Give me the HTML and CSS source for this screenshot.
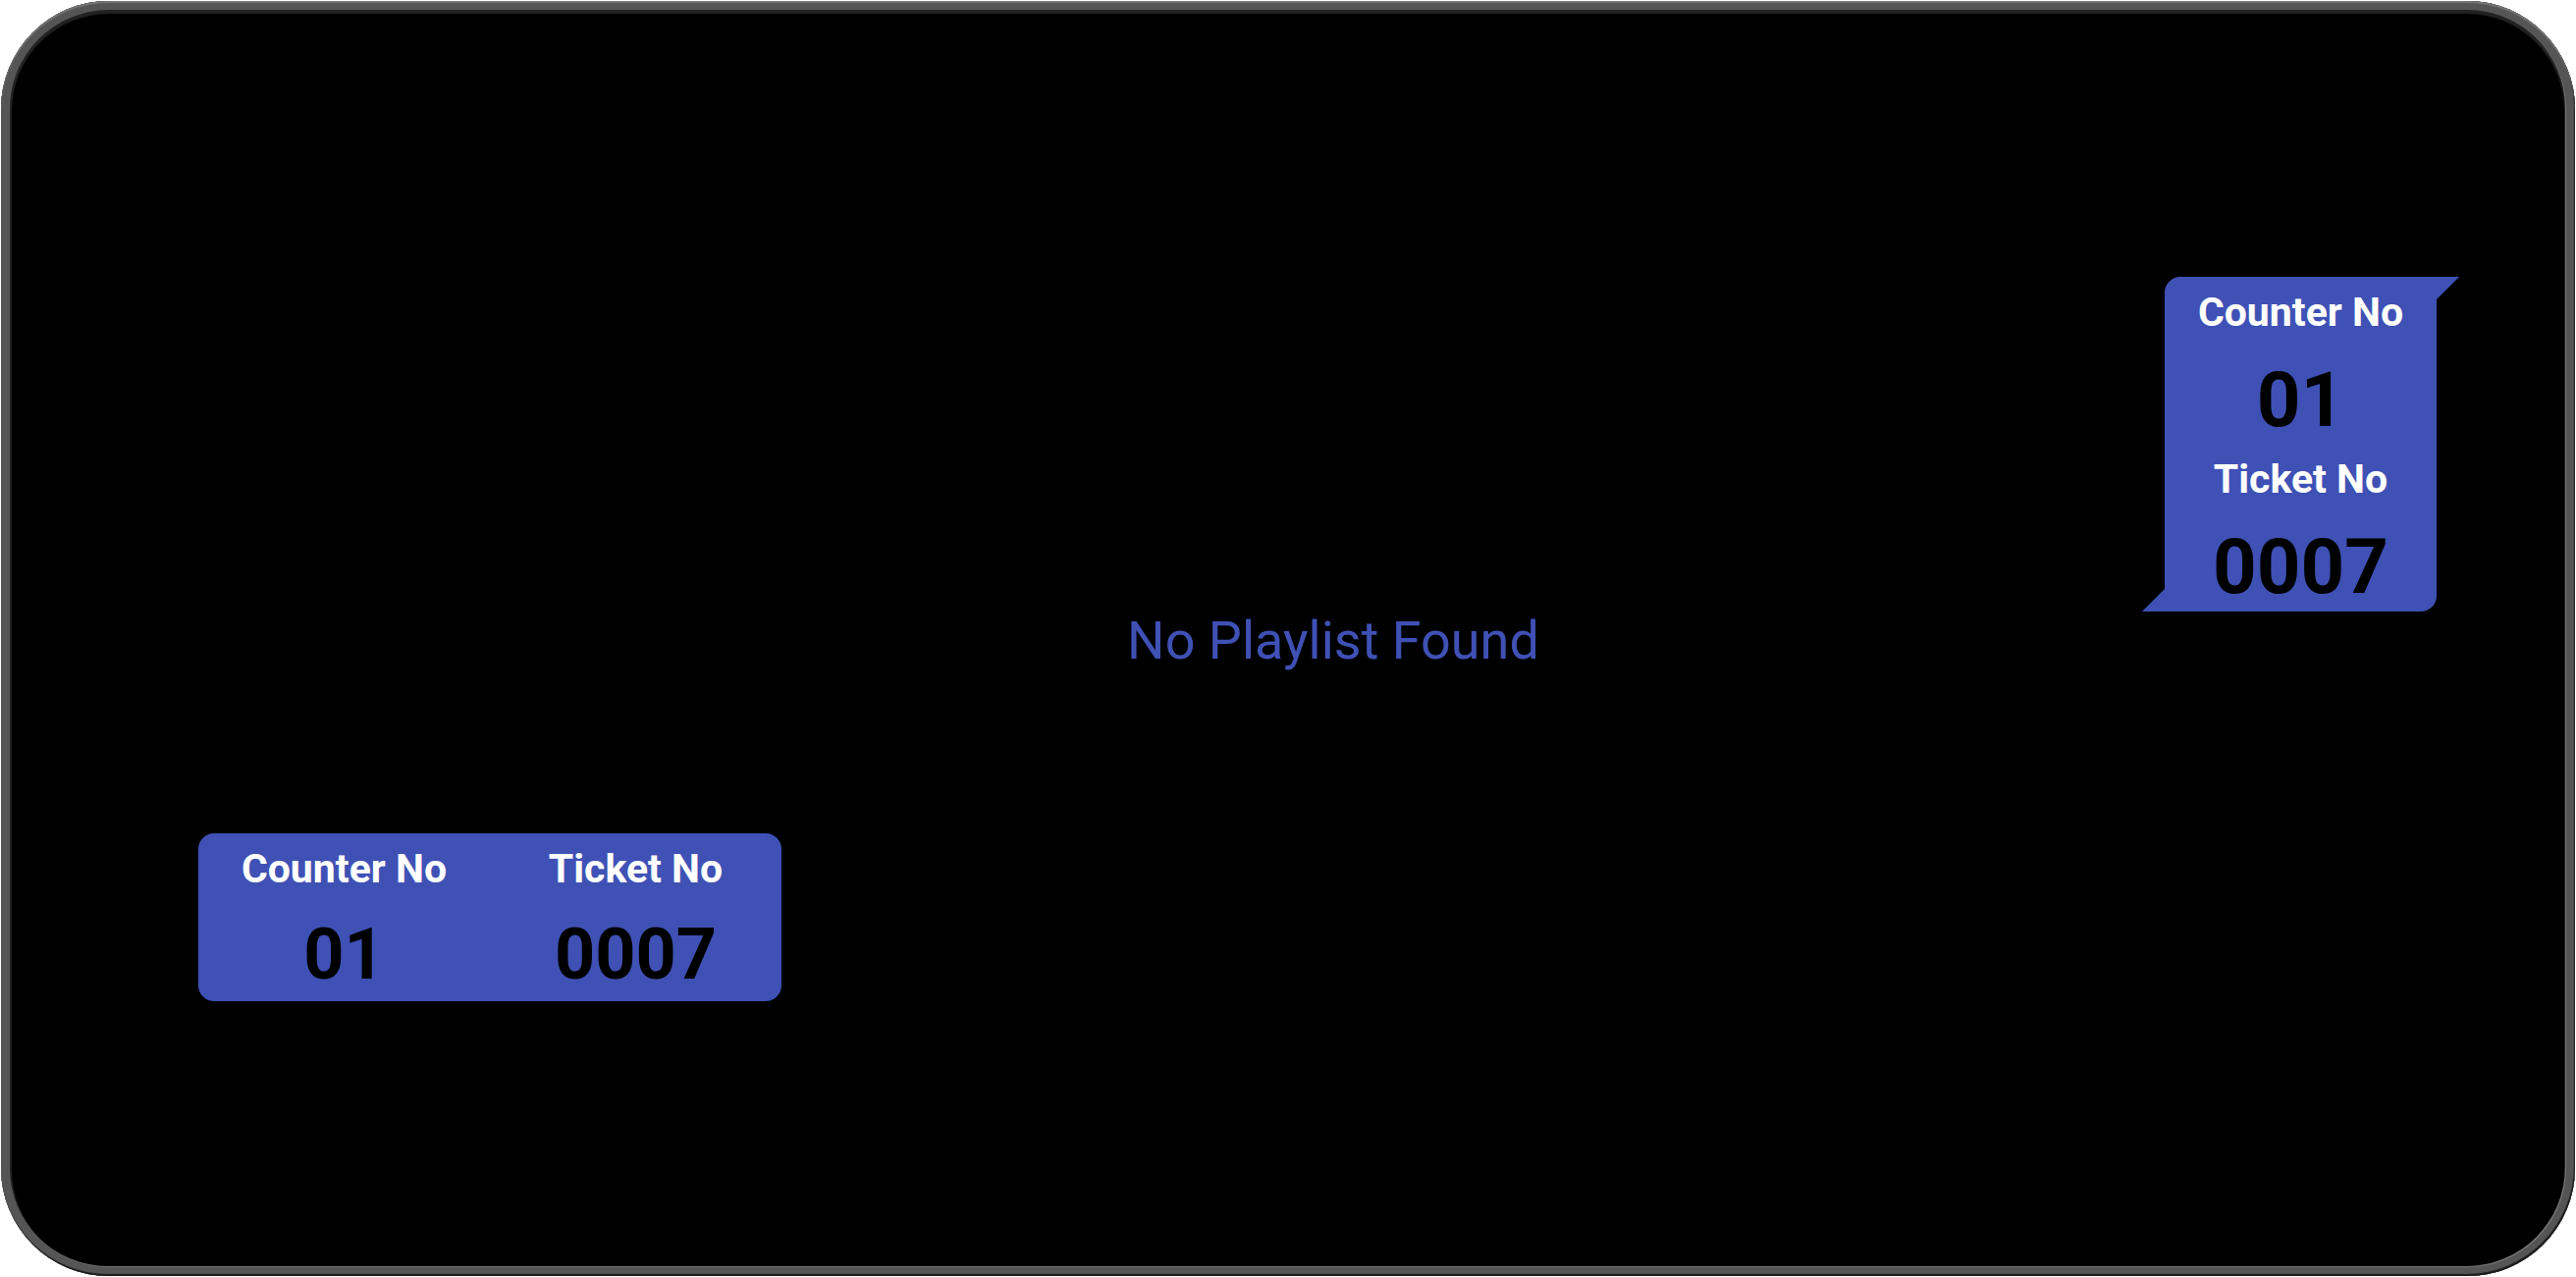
FILE: index.html
```html
<!DOCTYPE html>
<html lang="en">
<head>
<meta charset="utf-8">
<title>Ticket display</title>
<link rel="stylesheet" href="styles.css">
</head>
<body>
<main class="device">
  <p class="message">No Playlist Found</p>
  <dl class="ticket ticket-wide">
    <div class="entry"><dt class="label">Counter No</dt><dd class="value">01</dd></div>
    <div class="entry"><dt class="label">Ticket No</dt><dd class="value">0007</dd></div>
  </dl>
  <dl class="ticket ticket-tall">
    <div class="entry"><dt class="label">Counter No</dt><dd class="value">01</dd></div>
    <div class="entry"><dt class="label">Ticket No</dt><dd class="value">0007</dd></div>
  </dl>
</main>
</body>
</html>
```
FILE: styles.css
```css
:root {
  --accent: #3f51b5;
}

* {
  box-sizing: border-box;
}

body {
  margin: 0;
  padding: 1px;
  min-height: 100vh;
  display: flex;
  background: #fff;
  font-family: Roboto, "Liberation Sans", sans-serif;
}

/* Metal bezel: outer light and shade, rim, lower highlight, upper shade */
.device {
  position: relative;
  flex: 1;
  display: flex;
  align-items: center;
  justify-content: center;
  padding: 4px 0 0 92px;
  border-radius: 110px;
  background: #000;
  box-shadow:
    inset 0 2px 1px #777,
    inset -1px -2px 1px #1a1a1a,
    inset 0 0 0 9px #555,
    inset -1px -1px 0 9px #777,
    inset 0 2px 1px 11px #222;
}

.message {
  margin: 0;
  color: var(--accent);
  font-size: 54px;
  line-height: 64px;
}

/* Ticket panels float over the playlist */
.ticket {
  position: absolute;
  margin: 0;
  display: grid;
  background: var(--accent);
  text-align: center;
  font-weight: 700;
}

.ticket-wide {
  left: 201px;
  bottom: 280px;
  width: 594px;
  grid-template-columns: 1fr 1fr;
  border-radius: 16px;
}

.ticket-tall {
  top: 281px;
  right: 141px;
  width: 277px;
  padding-bottom: 1px;
  border-radius: 16px 0;
}

.entry {
  display: flex;
  flex-direction: column;
  gap: 15px;
  padding-bottom: 5px;
}

.label {
  color: #fff;
  font-size: 41px;
  line-height: 72px;
}

.value {
  margin: 0;
  color: #000;
  font-size: 78px;
  line-height: 78px;
}

.ticket-wide .entry {
  gap: 13px;
  padding-bottom: 8px;
}

.ticket-wide .value {
  font-size: 72px;
}

/* Folded corner tips */
.ticket-tall::before,
.ticket-tall::after {
  content: "";
  position: absolute;
  width: 23px;
  height: 23px;
  background: var(--accent);
}

.ticket-tall::before {
  top: 0;
  left: 100%;
  clip-path: polygon(0 0, 100% 0, 0 100%);
}

.ticket-tall::after {
  bottom: 0;
  right: 100%;
  clip-path: polygon(100% 0, 100% 100%, 0 100%);
}
```
